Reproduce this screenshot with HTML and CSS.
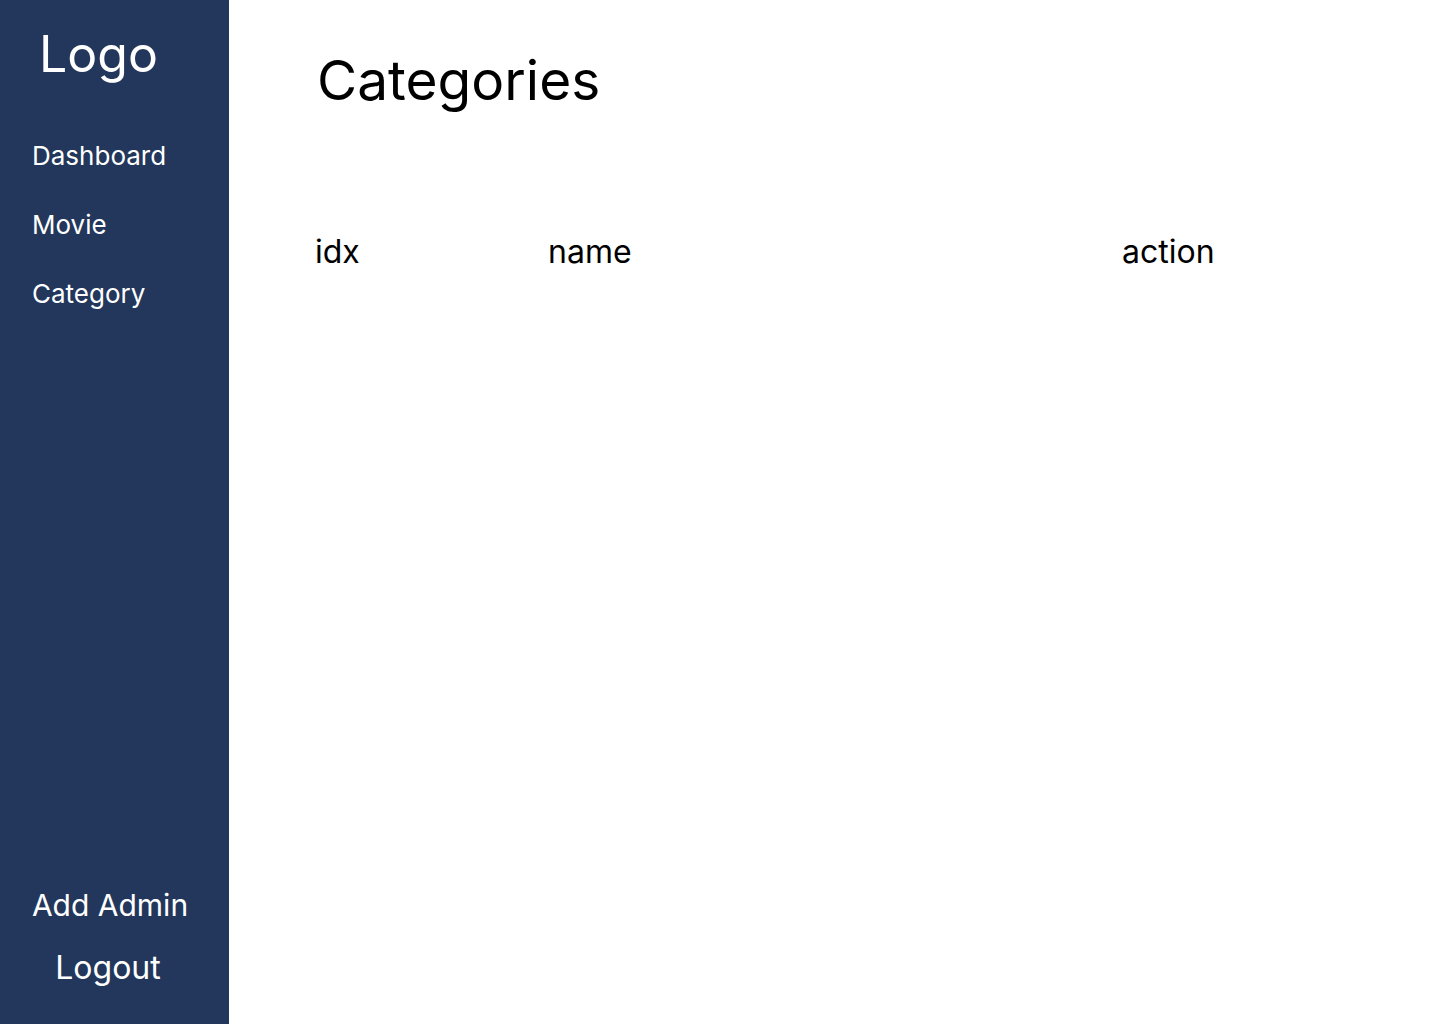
FILE: index.html
```html
<!DOCTYPE html>
<html lang="en">
<head>
<meta charset="utf-8">
<title>Categories</title>
<link rel="stylesheet" href="styles.css">
</head>
<body>
<div class="app">
  <aside class="sidebar">
    <div class="logo">Logo</div>
    <nav class="nav">
      <a class="nav-item" href="#">Dashboard</a>
      <a class="nav-item" href="#">Movie</a>
      <a class="nav-item" href="#">Category</a>
    </nav>
    <div class="bottom">
      <a class="add-admin" href="#">Add Admin</a>
      <a class="logout" href="#">Logout</a>
    </div>
  </aside>
  <main class="main">
    <h1 class="title">Categories</h1>
    <div class="table-head">
      <div class="col col-idx">idx</div>
      <div class="col col-name">name</div>
      <div class="col col-action">action</div>
    </div>
  </main>
</div>
</body>
</html>
```
FILE: styles.css
```css
* { box-sizing: border-box; }
html, body { margin: 0; padding: 0; }
body {
  font-family: Inter, "Noto Sans", sans-serif;
  color: #000;
  background: #fff;
}
.app {
  display: flex;
  height: 1024px;
}
.sidebar {
  width: 229px;
  flex: none;
  background: #22375b;
  color: #fff;
  display: flex;
  flex-direction: column;
}
.sidebar a { color: #fff; text-decoration: none; }
.logo {
  font-size: 50px;
  line-height: 60px;
  padding: 24px 0 0 39px;
}
.nav {
  display: flex;
  flex-direction: column;
  padding: 56px 0 0 32px;
  gap: 38px;
}
.nav-item {
  font-size: 26px;
  line-height: 31px;
}
.bottom {
  margin-top: auto;
  display: flex;
  flex-direction: column;
  align-items: center;
  padding-bottom: 37px;
  gap: 26px;
}
.add-admin {
  font-size: 30px;
  line-height: 36px;
  margin-left: -9px;
}
.logout {
  font-size: 32px;
  line-height: 38px;
  margin-left: -13px;
}
.main {
  flex: 1;
  padding: 48px 0 0 88px;
}
.title {
  margin: 0;
  font-weight: 400;
  font-size: 55px;
  line-height: 64px;
}
.table-head {
  display: flex;
  margin-top: 121px;
  font-size: 32px;
  line-height: 38px;
}
.col-idx { width: 233px; margin-left: -2px; }
.col-name { width: 574px; }
```
